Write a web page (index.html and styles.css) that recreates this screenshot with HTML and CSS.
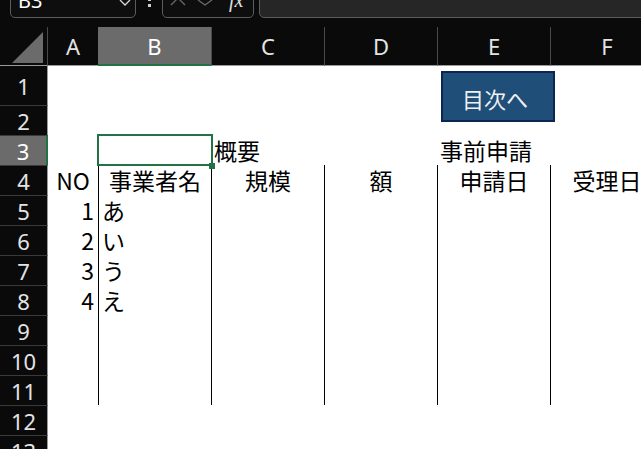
FILE: index.html
```html
<!DOCTYPE html>
<html lang="ja">
<head>
<meta charset="utf-8">
<title>Sheet</title>
<link rel="stylesheet" href="styles.css">
</head>
<body>
<div class="fbar">
  <div class="namebox">
    <span class="ref">B3</span>
    <svg class="chev" width="12" height="8" viewBox="0 0 12 8"><polyline points="1,1 6,6 11,1"/></svg>
  </div>
  <div class="dots"><i></i><i></i></div>
  <div class="fbtns">
    <svg class="xicon" width="16" height="16" viewBox="0 0 16 16"><path d="M1 1 L15 15 M15 1 L1 15"/></svg>
    <svg class="vicon" width="16" height="8" viewBox="0 0 16 8"><polyline points="1,1 8,6 15,1"/></svg>
    <span class="fx">fx</span>
  </div>
  <div class="finput"></div>
</div>

<div class="sheet">
  <div class="corner"><svg width="47" height="38" viewBox="0 0 47 38"><polygon points="12,36 43,36 43,5"/></svg></div>
  <div class="ch">A</div>
  <div class="ch sel">B</div>
  <div class="ch sep">C</div>
  <div class="ch sep">D</div>
  <div class="ch sep">E</div>
  <div class="ch sep">F</div>

  <div class="rh first">1</div>
  <div class="c span"></div>

  <div class="rh">2</div>
  <div class="c span"></div>

  <div class="rh sel">3</div>
  <div class="c"></div>
  <div class="c"></div>
  <div class="c">概要</div>
  <div class="c"></div>
  <div class="c">事前申請</div>
  <div class="c"></div>

  <div class="rh">4</div>
  <div class="c ctr">NO</div>
  <div class="c ctr bl">事業者名</div>
  <div class="c ctr bl">規模</div>
  <div class="c ctr bl">額</div>
  <div class="c ctr bl">申請日</div>
  <div class="c ctr bl">受理日</div>

  <div class="rh">5</div>
  <div class="c num">1</div>
  <div class="c bl">あ</div>
  <div class="c bl"></div><div class="c bl"></div><div class="c bl"></div><div class="c bl"></div>

  <div class="rh">6</div>
  <div class="c num">2</div>
  <div class="c bl">い</div>
  <div class="c bl"></div><div class="c bl"></div><div class="c bl"></div><div class="c bl"></div>

  <div class="rh">7</div>
  <div class="c num">3</div>
  <div class="c bl">う</div>
  <div class="c bl"></div><div class="c bl"></div><div class="c bl"></div><div class="c bl"></div>

  <div class="rh">8</div>
  <div class="c num">4</div>
  <div class="c bl">え</div>
  <div class="c bl"></div><div class="c bl"></div><div class="c bl"></div><div class="c bl"></div>

  <div class="rh">9</div>
  <div class="c"></div>
  <div class="c bl"></div><div class="c bl"></div><div class="c bl"></div><div class="c bl"></div><div class="c bl"></div>

  <div class="rh">10</div>
  <div class="c"></div>
  <div class="c bl"></div><div class="c bl"></div><div class="c bl"></div><div class="c bl"></div><div class="c bl"></div>

  <div class="rh">11</div>
  <div class="c"></div>
  <div class="c bl"></div><div class="c bl"></div><div class="c bl"></div><div class="c bl"></div><div class="c bl"></div>

  <div class="rh">12</div>
  <div class="c span"></div>

  <div class="rh">13</div>
  <div class="c span"></div>

  <div class="selbox"><i class="handle"></i></div>
  <div class="shape">目次へ</div>
</div>
</body>
</html>
```

FILE: styles.css
```css
* { box-sizing: border-box; }

html, body {
  margin: 0;
  padding: 0;
  width: 641px;
  height: 449px;
  overflow: hidden;
  background: #0a0a0a;
}

body {
  font-family: "Noto Sans", "Open Sans", sans-serif;
}

/* ---------- formula bar ---------- */
.fbar {
  display: flex;
  align-items: flex-end;
  height: 18px;
  margin-bottom: 9px;
}

.namebox {
  margin-left: 10px;
  width: 126px;
  height: 36px;
  flex: none;
  display: flex;
  align-items: flex-end;
  padding: 0 4px 6px 7px;
  border: 1px solid #5c5c5c;
  border-radius: 5px;
  background: #0e0e0e;
}

.ref {
  color: #ffffff;
  font-size: 20px;
  line-height: 20px;
}

.chev {
  margin-left: auto;
  margin-bottom: 4px;
  fill: none;
  stroke: #d8d8d8;
  stroke-width: 1.3;
}

.dots {
  width: 26px;
  flex: none;
  display: flex;
  flex-direction: column;
  align-items: center;
  gap: 3px;
  margin-bottom: 11px;
}

.dots i {
  display: block;
  width: 3px;
  height: 3px;
  background: #d0d0d0;
}

.fbtns {
  width: 92px;
  height: 36px;
  flex: none;
  display: flex;
  align-items: flex-end;
  padding: 0 0 7px 7px;
  border: 1px solid #5c5c5c;
  border-radius: 5px;
  background: #0e0e0e;
}

.xicon {
  margin-bottom: 4px;
  fill: none;
  stroke: #6a6a6a;
  stroke-width: 1.3;
}

.vicon {
  margin-left: 11px;
  margin-bottom: 3px;
  fill: none;
  stroke: #6a6a6a;
  stroke-width: 1.3;
}

.fx {
  margin-left: 16px;
  margin-bottom: 0;
  color: #e0e0e0;
  font-family: "Liberation Serif", serif;
  font-style: italic;
  font-size: 20px;
  line-height: 20px;
}

.finput {
  flex: 1;
  height: 36px;
  margin-left: 5px;
  margin-right: -10px;
  border: 1px solid #5c5c5c;
  border-radius: 5px;
  background: #262626;
}

/* ---------- sheet ---------- */
.sheet {
  position: relative;
  display: grid;
  grid-template-columns: 48px 50px 113px 113px 113px 113px 113px;
  grid-template-rows: 39px 39px repeat(12, 30px);
}

.corner {
  background: #0a0a0a;
  border-right: 1px solid #4a4a4a;
  border-bottom: 1px solid #9a9a9a;
}

.corner svg {
  display: block;
  fill: #6b6b6b;
}

.ch {
  display: flex;
  align-items: center;
  justify-content: center;
  background: #0a0a0a;
  color: #e4e4e4;
  font-size: 22px;
  border-bottom: 1px solid #9a9a9a;
}

.ch.sep {
  border-left: 1px solid #4a4a4a;
}

.ch.sel {
  background: #6b6b6b;
  color: #ffffff;
  border-bottom: 2px solid #217346;
}

.rh {
  display: flex;
  align-items: center;
  justify-content: center;
  background: #0a0a0a;
  color: #e4e4e4;
  font-size: 22px;
  border-right: 1px solid #9a9a9a;
  border-top: 1px solid #3a3a3a;
}

.rh.first {
  border-top: none;
}

.rh.sel {
  background: #6b6b6b;
  color: #ffffff;
  border-right: 2px solid #217346;
}

.c {
  display: flex;
  align-items: flex-end;
  padding: 0 3px;
  background: #ffffff;
  color: #000000;
  font-family: "Noto Sans CJK JP", "Noto Sans", sans-serif;
  font-size: 23px;
  line-height: 30px;
  white-space: nowrap;
  overflow: visible;
}

.c.span {
  grid-column: span 6;
}

.c.ctr {
  justify-content: center;
}

.c.num {
  justify-content: flex-end;
  padding-right: 4px;
}

.c.bl {
  border-left: 1px solid #000000;
}

/* overlays */
.selbox {
  position: absolute;
  left: 97px;
  top: 107px;
  width: 116px;
  height: 32px;
  border: 2px solid #217346;
}

.handle {
  position: absolute;
  left: 110px;
  top: 27px;
  width: 6px;
  height: 6px;
  background: #217346;
}

.shape {
  position: absolute;
  left: 441px;
  top: 44px;
  width: 114px;
  height: 51px;
  display: flex;
  align-items: center;
  justify-content: center;
  padding: 3px 6px 0 0;
  background: #1f4e79;
  border: 2px solid #0c2552;
  color: #f0f0f0;
  font-family: "Noto Sans CJK JP", sans-serif;
  font-size: 22px;
}
```
